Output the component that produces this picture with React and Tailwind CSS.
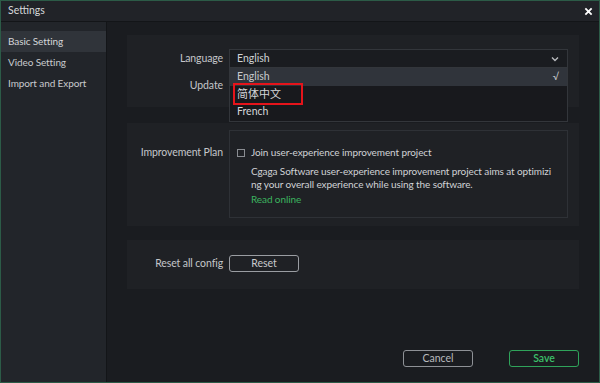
import { useState } from 'react'

const font = { fontFamily: 'Lato, "Noto Sans CJK SC", sans-serif' }

function Label({ children, className = '' }) {
  return (
    <div className={`w-[96px] shrink-0 text-right text-[10.5px] tracking-[-0.1px] text-[#c4c6ca] ${className}`}>
      {children}
    </div>
  )
}

export default function App() {
  const [lang] = useState('English')
  const options = ['English', '简体中文', 'French']

  return (
    <div
      style={font}
      className="w-[600px] h-[383px] flex flex-col border border-[#2c5b47] bg-[#1a1c20] text-[#c8cacd] overflow-hidden"
    >
      <div className="h-[21px] shrink-0 flex items-center justify-between pl-[7px] pr-[6px] bg-[#212328] border-b border-[#131518]">
        <span className="text-[10.5px] text-[#d6d8db]">Settings</span>
        <svg width="9" height="9" viewBox="0 0 10 10" className="text-white">
          <path d="M1.5 1.5 L8.5 8.5 M8.5 1.5 L1.5 8.5" stroke="currentColor" strokeWidth="2" />
        </svg>
      </div>

      <div className="flex flex-1 min-h-0">
        <div className="w-[106px] shrink-0 bg-[#22252a] border-r border-[#131518] pt-[9px] text-[10px] tracking-[-0.1px]">
          <div className="h-[21px] flex items-center pl-[7px] bg-[#30343a] text-[#d4d6d9]">Basic Setting</div>
          <div className="h-[21px] flex items-center pl-[7px] text-[#c8cacd]">Video Setting</div>
          <div className="h-[21px] flex items-center pl-[7px] text-[#c8cacd]">Import and Export</div>
        </div>

        <div className="flex-1 min-w-0 flex flex-col px-[20px] pt-[13px] pb-[15px]">
          <div className="bg-[#1f2125] pt-[14px] pb-[12px] pr-[11px] flex flex-col gap-[8px]">
            <div className="flex items-center gap-[6px]">
              <Label>Language</Label>
              <div className="relative flex-1">
                <div className="h-[19px] flex items-center justify-between px-[7px] bg-[#1a1c20] border border-[#33363b] text-[10.5px] text-[#d0d2d5]">
                  <span>{lang}</span>
                  <svg width="8" height="6" viewBox="0 0 8 6" className="mr-[1px]">
                    <path d="M1 1.5 L4 4.5 L7 1.5" stroke="#b8babd" strokeWidth="1.4" fill="none" />
                  </svg>
                </div>
                <div className="absolute left-0 right-0 top-[19px] z-10 bg-[#18191d] border border-[#33363b] border-t-0 text-[10.5px]">
                  {options.map((o, i) => (
                    <div
                      key={o}
                      className={`relative h-[17.5px] flex items-center justify-between px-[7px] ${
                        i === 0 ? 'bg-[#30343b] text-[#c8cacd]' : 'text-[#d4d6d9]'
                      }`}
                    >
                      <span className={i === 1 ? 'text-[11px]' : ''}>{o}</span>
                      {i === 0 && <span className="text-[10px] text-[#c8cacd] mr-[1px]">√</span>}
                      {i === 1 && (
                        <div className="absolute left-[3px] top-[-3px] w-[70px] h-[22px] border-2 border-[#e5141b]" />
                      )}
                    </div>
                  ))}
                </div>
              </div>
            </div>
            <div className="flex items-center gap-[6px] h-[19px]">
              <Label>Update</Label>
            </div>
          </div>

          <div className="mt-[16px] bg-[#1f2125] pt-[7px] pb-[8px] pr-[11px] flex gap-[6px]">
            <Label className="pt-[15px]">Improvement Plan</Label>
            <div className="flex-1 min-w-0 overflow-hidden border border-[#2e3136] pt-[14px] pb-[11px] pl-[7px] text-[10px] tracking-[-0.1px] whitespace-nowrap">
              <div className="flex items-center gap-[6px] leading-[15px] text-[#d0d2d5]">
                <span className="w-[8px] h-[8px] border border-[#8a8d92]" />
                <span>Join user-experience improvement project</span>
              </div>
              <div className="pl-[14px] mt-[5px] leading-[13px] text-[#d0d2d5]">
                Cgaga Software user-experience improvement project aims at optimizi
                <br />
                ng your overall experience while using the software.
              </div>
              <div className="pl-[14px] mt-[1px] leading-[14px] text-[#3cb35f]">Read online</div>
            </div>
          </div>

          <div className="mt-[14px] bg-[#1f2125] pt-[15px] pb-[17px] flex items-center gap-[6px]">
            <Label>Reset all config</Label>
            <button className="w-[70px] h-[17px] rounded-[3px] border border-[#9a9da2] text-[10.5px] text-[#c8cacd] flex items-center justify-center">
              Reset
            </button>
          </div>

          <div className="mt-auto flex justify-end gap-[36px]">
            <button className="w-[70px] h-[17px] rounded-[3px] border border-[#8e9196] text-[10.5px] text-[#b8babd] flex items-center justify-center">
              Cancel
            </button>
            <button className="w-[70px] h-[17px] rounded-[3px] border border-[#2fa35a] text-[10.5px] font-semibold text-[#3cc06a] flex items-center justify-center">
              Save
            </button>
          </div>
        </div>
      </div>
    </div>
  )
}
